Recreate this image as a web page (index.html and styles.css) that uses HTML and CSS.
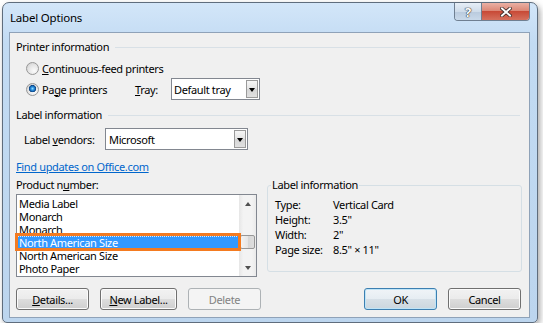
FILE: index.html
```html
<!DOCTYPE html>
<html lang="en">
<head>
  <meta charset="UTF-8" />
  <title>Label Options</title>
  <link rel="stylesheet" href="styles.css">
</head>
<body>
  <div class="window">
    <div class="titlebar">
      <span class="title">Label Options</span>
      <div class="caption-buttons">
        <span class="cap-btn help">?</span>
        <span class="cap-btn close">
          <svg width="12" height="10" viewBox="0 0 12 10">
            <path d="M2 1.5 L10 8.5 M10 1.5 L2 8.5" stroke="#3a2a28" stroke-width="3.6" stroke-linecap="square" />
            <path d="M2 1.5 L10 8.5 M10 1.5 L2 8.5" stroke="#fff" stroke-width="2" stroke-linecap="square" />
          </svg>
        </span>
      </div>
    </div>

    <div class="client">
      <div class="group-heading"><span>Printer information</span><i class="rule"></i></div>
      <div class="radio-row first">
        <span class="radio"></span>
        <span class="radio-text"><u>C</u>ontinuous-feed printers</span>
      </div>
      <div class="radio-row tall">
        <span class="radio checked"></span>
        <span class="radio-text page-text">Pa<u>g</u>e printers</span>
        <span class="tray-label"><u>T</u>ray:</span>
        <div class="combo tray"><span class="combo-text">Default tray</span><span class="combo-arrow"></span></div>
      </div>

      <div class="group-heading second"><span>Label information</span><i class="rule"></i></div>
      <div class="vendor-row">
        <span class="vendor-label">Label <u>v</u>endors:</span>
        <div class="combo vendor"><span class="combo-text">Microsoft</span><span class="combo-arrow"></span></div>
      </div>
      <a class="office-link" href="#">Find updates on Office.com</a>

      <div class="bottom">
        <div class="product">
          <div class="field-label">Product n<u>u</u>mber:</div>
          <div class="listbox">
            <ul class="items">
              <li>Media Label</li>
              <li>Monarch</li>
              <li>Monarch</li>
              <li class="selected">North American Size</li>
              <li>North American Size</li>
              <li>Photo Paper</li>
            </ul>
            <div class="scrollbar">
              <span class="sb-arrow up"></span>
              <span class="sb-track"><span class="sb-thumb"></span></span>
              <span class="sb-arrow down"></span>
            </div>
          </div>
        </div>

        <fieldset class="label-info">
          <legend>Label information</legend>
          <div class="info-rows">
            <span>Type:</span><span>Vertical Card</span>
            <span>Height:</span><span>3.5"</span>
            <span>Width:</span><span>2"</span>
            <span>Page size:</span><span>8.5" × 11"</span>
          </div>
        </fieldset>
      </div>

      <div class="buttons">
        <button class="btn"><u>D</u>etails...</button>
        <button class="btn wide"><u>N</u>ew Label...</button>
        <button class="btn" disabled>Delete</button>
        <button class="btn default ok">OK</button>
        <button class="btn">Cancel</button>
      </div>
    </div>
  </div>
</body>
</html>
```

FILE: styles.css
```css
body {
  margin: 0;
  background: #fff;
  font-family: "Noto Sans", sans-serif;
  font-size: 11px;
  letter-spacing: -0.35px;
  color: #000;
}
u {
  text-decoration-thickness: 1px;
  text-underline-offset: 1px;
}
.window {
  margin: 2px 0 0 2px;
  width: 536px;
  height: 321px;
  box-sizing: border-box;
  border: 1px solid #5f6d7d;
  border-radius: 7px 7px 5px 5px;
  background: linear-gradient(#d3e6f9, #c2dbf3 40px, #bcd5ee);
  box-shadow: 2px 3px 6px rgba(0,0,0,0.35);
  padding: 0 7px 4px 6px;
  display: flex;
  flex-direction: column;
}
.titlebar {
  height: 29px;
  flex: none;
  display: flex;
  align-items: flex-start;
}
.title {
  margin: 7px 0 0 1px;
  line-height: 16px;
  font-size: 11.5px;
  letter-spacing: -0.2px;
}
.caption-buttons {
  margin-left: auto;
  display: flex;
  height: 17px;
  border: 1px solid #6f7f91;
  border-top: none;
  border-radius: 0 0 4px 4px;
  overflow: hidden;
}
.cap-btn {
  display: flex;
  align-items: center;
  justify-content: center;
}
.help {
  width: 26px;
  border-right: 1px solid #6f7f91;
  background: linear-gradient(#e6eef7, #cfdcea 50%, #b9cadd 51%, #c9d9ea);
  color: #fff;
  font-weight: bold;
  font-size: 13px;
  text-shadow: 0 0 1px #333, 0 0 1px #333, 0 0 1px #333;
}
.close {
  width: 47px;
  background: linear-gradient(#eab0a4, #dc8877 45%, #c84a37 50%, #d5705d);
}
.client {
  flex: 1;
  border: 1px solid #8fa2b8;
  background: #f0f0f0;
  padding: 6px 7px 0 6px;
}
.group-heading {
  display: flex;
  align-items: center;
  line-height: 16px;
}
.group-heading .rule {
  flex: 1;
  height: 1px;
  background: #d8e0e6;
  margin: 1px 2px 0 6px;
}
.group-heading.second {
  margin-top: 7px;
}
.radio-row {
  display: flex;
  align-items: center;
  height: 20px;
  padding-left: 10px;
}
.radio-row.first {
  margin-top: 3px;
}
.radio-row.tall {
  height: 22px;
}
.radio {
  width: 11px;
  height: 11px;
  border-radius: 50%;
  border: 1px solid #979797;
  background: radial-gradient(circle at 65% 70%, #fbfbfb, #e4e4e4 55%, #c9c9c9);
}
.radio.checked {
  background:
    radial-gradient(circle at 50% 42%, #9ee0ff 0, #3aa0e8 1.3px, #1467b8 2.6px, #0c3f7a 3.4px, transparent 3.9px),
    radial-gradient(circle at 65% 70%, #fbfbfb, #e4e4e4 55%, #c9c9c9);
}
.radio-text {
  margin-left: 3px;
}
.page-text {
  width: 93px;
}
.tray-label {
  width: 36px;
}
.combo {
  height: 22px;
  box-sizing: border-box;
  border: 1px solid #828790;
  background: #fff;
  display: flex;
  align-items: center;
  padding: 1px;
}
.combo-text {
  flex: 1;
  padding-left: 1px;
}
.combo-arrow {
  width: 12px;
  align-self: stretch;
  box-sizing: border-box;
  border: 1px solid #9a9a9a;
  background: linear-gradient(#f6f6f6, #e4e4e4 50%, #d6d6d6 51%, #e0e0e0);
  display: flex;
  align-items: center;
  justify-content: center;
}
.combo-arrow::after {
  content: "";
  border-left: 3.5px solid transparent;
  border-right: 3.5px solid transparent;
  border-top: 4px solid #000;
  margin-top: 1px;
}
.tray {
  width: 89px;
}
.vendor-row {
  display: flex;
  align-items: center;
  height: 22px;
  margin-top: 5px;
  padding-left: 8px;
}
.vendor-label {
  width: 81px;
}
.vendor {
  width: 143px;
  padding-left: 2px;
}
.office-link {
  display: block;
  width: fit-content;
  margin-top: 9px;
  line-height: 16px;
  color: #0066cc;
}
.bottom {
  display: grid;
  grid-template-columns: 241px 255px;
  gap: 10px;
  margin-top: 2px;
  align-items: start;
}
.field-label {
  line-height: 16px;
}
.listbox {
  margin-top: 1px;
  height: 83px;
  box-sizing: border-box;
  border: 1px solid #828790;
  background: #fff;
  display: flex;
}
.items {
  list-style: none;
  margin: 0;
  padding: 2px 0 0 0;
  width: 222px;
}
.items li {
  line-height: 13px;
  padding-left: 2px;
  white-space: nowrap;
}
.items li.selected {
  position: relative;
  background: #3399ff;
  color: #fff;
  outline: 1px dotted rgba(255,255,255,0.8);
  outline-offset: -1px;
}
.items li.selected::after {
  content: "";
  position: absolute;
  top: -3px;
  bottom: -2px;
  left: -2px;
  right: -2px;
  border: 3px solid #f47b20;
  z-index: 1;
}
.scrollbar {
  width: 17px;
  display: flex;
  flex-direction: column;
  background: linear-gradient(90deg, #e6e6e6, #f3f3f3 25%, #f3f3f3 75%, #eaeaea);
}
.sb-arrow {
  height: 17px;
  display: flex;
  align-items: center;
  justify-content: center;
}
.sb-arrow.up::after {
  content: "";
  border-left: 3.5px solid transparent;
  border-right: 3.5px solid transparent;
  border-bottom: 4px solid #505050;
}
.sb-arrow.down::after {
  content: "";
  border-left: 3.5px solid transparent;
  border-right: 3.5px solid transparent;
  border-top: 4px solid #505050;
}
.sb-track {
  flex: 1;
  padding-top: 23px;
}
.sb-thumb {
  display: block;
  height: 14px;
  margin: 0 1px;
  box-sizing: border-box;
  border: 1px solid #979797;
  border-radius: 2px;
  background: linear-gradient(90deg, #f3f3f3, #e6e6e6 50%, #d6d6d6 51%, #dedede);
}
.label-info {
  margin: 0;
  height: 95px;
  box-sizing: border-box;
  border: 1px solid #d5dfe5;
  border-radius: 3px;
  padding: 4px 0 0 3px;
}
.label-info legend {
  padding: 0 1px;
  line-height: 16px;
}
.info-rows {
  display: grid;
  grid-template-columns: 58px 1fr;
  line-height: 15px;
  padding-left: 4px;
}
.buttons {
  display: flex;
  gap: 11px;
  margin: 11px 1px 0 0;
}
.btn {
  width: 73px;
  height: 22px;
  font: inherit;
  letter-spacing: inherit;
  color: #000;
  border: 1px solid #707070;
  border-radius: 3px;
  background: linear-gradient(#f2f2f2, #ebebeb 50%, #dddddd 51%, #cfcfcf);
  box-shadow: inset 0 0 0 1px #fbfbfb;
  padding: 0;
}
.btn.wide {
  width: 77px;
}
.btn:disabled {
  border-color: #adb2b5;
  background: #f4f4f4;
  color: #838383;
  box-shadow: none;
}
.btn.ok {
  margin-left: auto;
}
.btn.default {
  border-color: #3c7fb1;
  box-shadow: inset 0 0 0 1px #bfe4f7;
  background: linear-gradient(#f0f4f7, #e6edf2 50%, #d7e0e7 51%, #cbd6de);
}
```
